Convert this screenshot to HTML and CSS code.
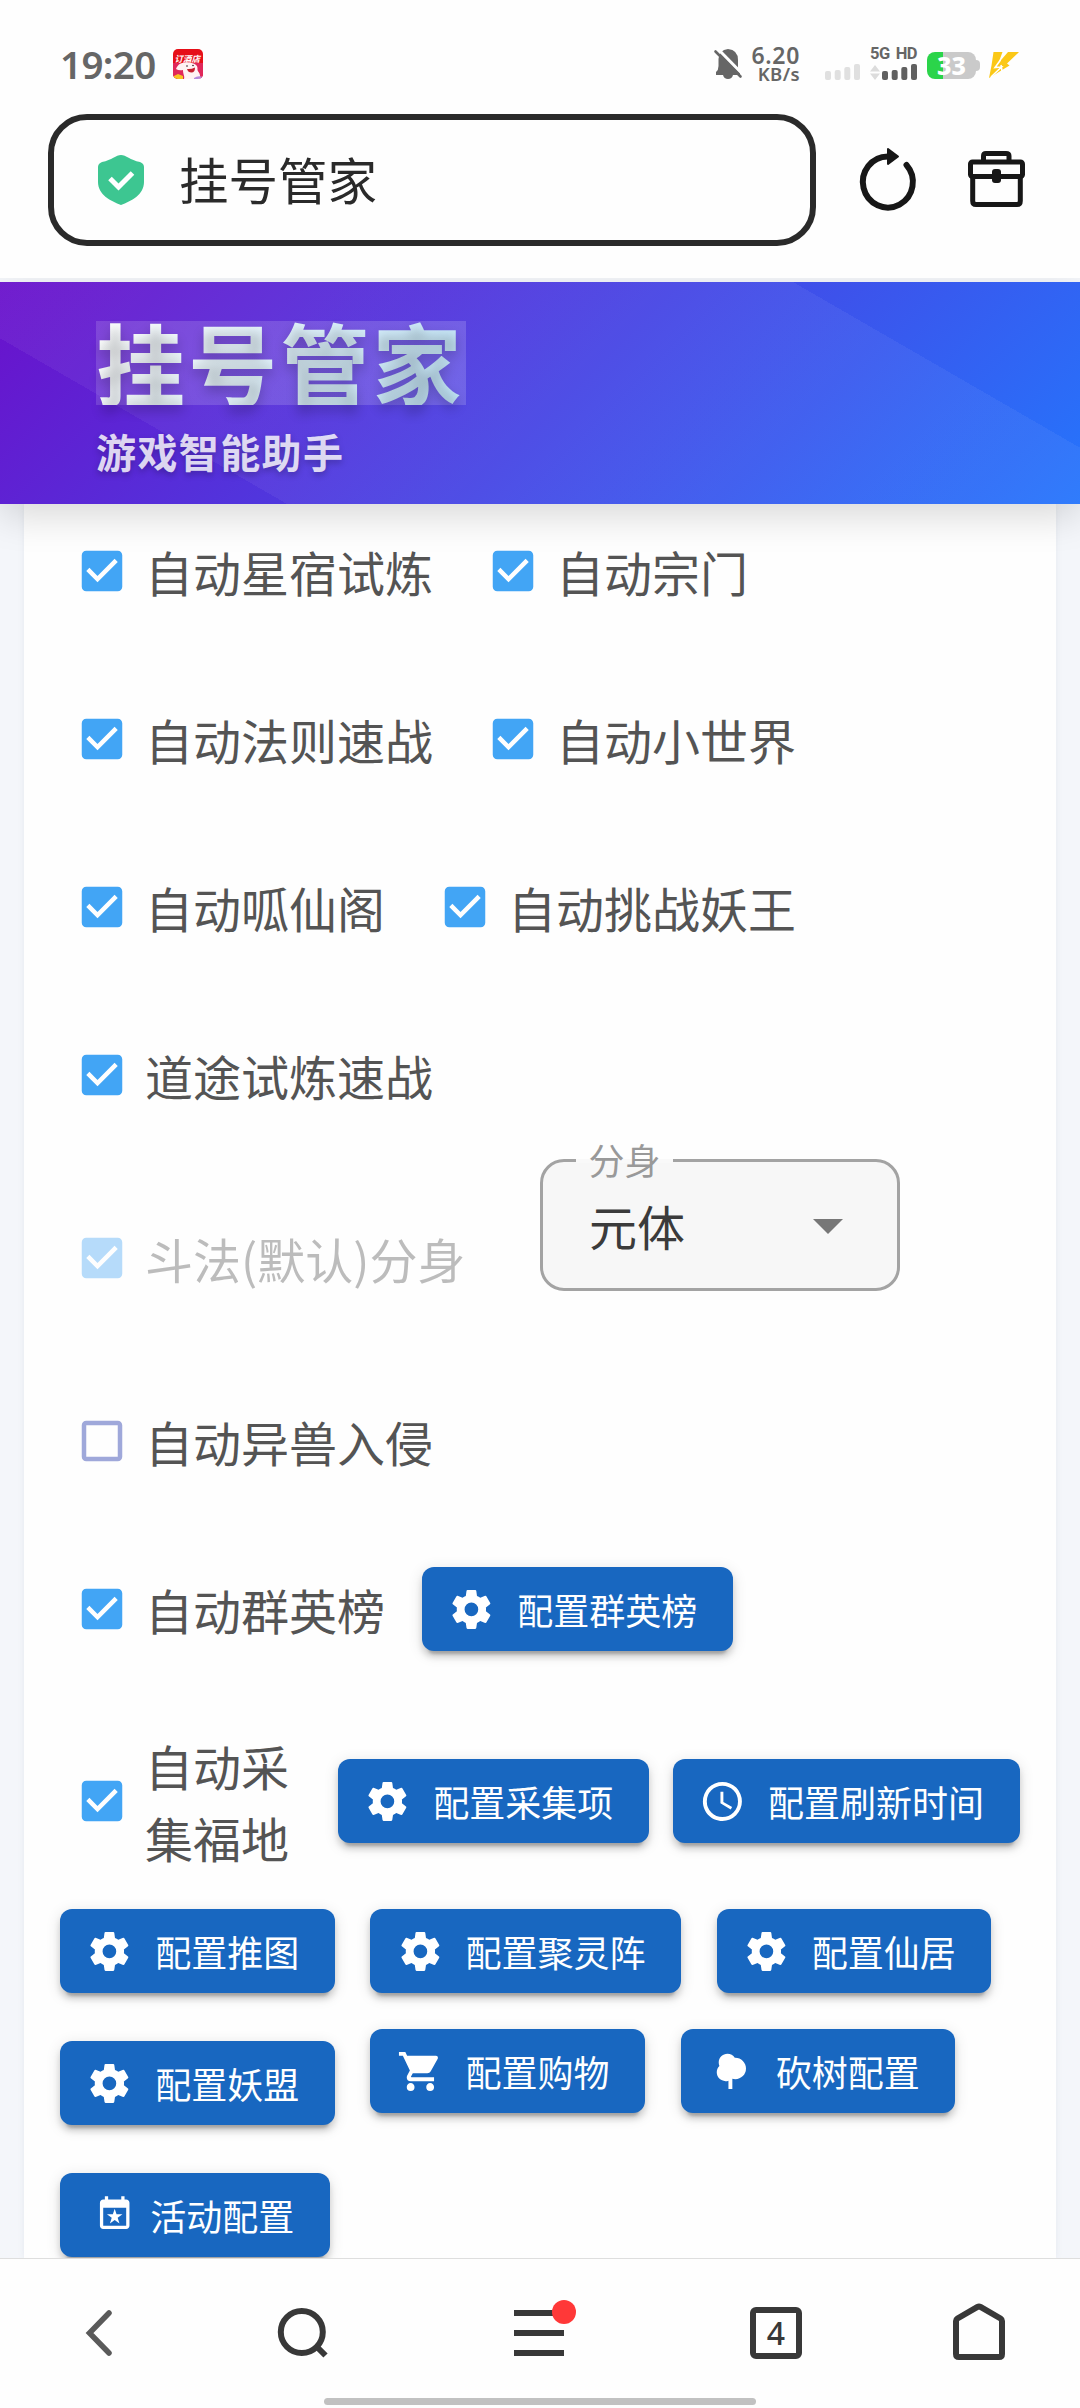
FILE: index.html
```html
<!DOCTYPE html>
<html lang="zh-CN">
<head>
<meta charset="utf-8">
<title>挂号管家</title>
<link rel="stylesheet" href="styles.css">
</head>
<body>
<svg class="defs" width="0" height="0" aria-hidden="true">
  <symbol id="i-check" viewBox="0 0 24 24"><path d="M10,17L5,12L6.41,10.58L10,14.17L17.59,6.58L19,8M19,3H5C3.89,3 3,3.89 3,5V19A2,2 0 0,0 5,21H19A2,2 0 0,0 21,19V5C21,3.89 20.1,3 19,3Z"/></symbol>
  <symbol id="i-blank" viewBox="0 0 24 24"><path d="M19,3H5C3.89,3 3,3.89 3,5V19A2,2 0 0,0 5,21H19A2,2 0 0,0 21,19V5C21,3.89 20.1,3 19,3M19,5V19H5V5H19Z"/></symbol>
  <symbol id="i-cog" viewBox="0 0 24 24"><path d="M12,15.5A3.5,3.5 0 0,1 8.5,12A3.5,3.5 0 0,1 12,8.5A3.5,3.5 0 0,1 15.5,12A3.5,3.5 0 0,1 12,15.5M19.43,12.97C19.47,12.65 19.5,12.33 19.5,12C19.5,11.67 19.47,11.34 19.43,11L21.54,9.37C21.73,9.22 21.78,8.95 21.66,8.73L19.66,5.27C19.54,5.05 19.27,4.96 19.05,5.05L16.56,6.05C16.04,5.66 15.5,5.32 14.87,5.07L14.5,2.42C14.46,2.18 14.25,2 14,2H10C9.75,2 9.54,2.18 9.5,2.42L9.13,5.07C8.5,5.32 7.96,5.66 7.44,6.05L4.95,5.05C4.73,4.96 4.46,5.05 4.34,5.27L2.34,8.73C2.21,8.95 2.27,9.22 2.46,9.37L4.57,11C4.53,11.34 4.5,11.67 4.5,12C4.5,12.33 4.53,12.65 4.57,12.97L2.46,14.63C2.27,14.78 2.21,15.05 2.34,15.27L4.34,18.73C4.46,18.95 4.73,19.03 4.95,18.95L7.44,17.94C7.96,18.34 8.5,18.68 9.13,18.93L9.5,21.58C9.54,21.82 9.75,22 10,22H14C14.25,22 14.46,21.82 14.5,21.58L14.87,18.93C15.5,18.67 16.04,18.34 16.56,17.94L19.05,18.95C19.27,19.03 19.54,18.95 19.66,18.73L21.66,15.27C21.78,15.05 21.73,14.78 21.54,14.63L19.43,12.97Z"/></symbol>
  <symbol id="i-clock" viewBox="0 0 24 24"><path d="M12,20A8,8 0 0,0 20,12A8,8 0 0,0 12,4A8,8 0 0,0 4,12A8,8 0 0,0 12,20M12,2A10,10 0 0,1 22,12A10,10 0 0,1 12,22C6.47,22 2,17.5 2,12A10,10 0 0,1 12,2M12.5,7V12.25L17,14.92L16.25,16.15L11,13V7H12.5Z"/></symbol>
  <symbol id="i-cart" viewBox="0 0 24 24"><path d="M17,18C15.89,18 15,18.89 15,20A2,2 0 0,0 17,22A2,2 0 0,0 19,20C19,18.89 18.1,18 17,18M1,2V4H3L6.6,11.59L5.24,14.04C5.09,14.32 5,14.65 5,15A2,2 0 0,0 7,17H19V15H7.42A0.25,0.25 0 0,1 7.17,14.75C7.17,14.7 7.18,14.66 7.2,14.63L8.1,13H15.55C16.3,13 16.96,12.58 17.3,11.97L20.88,5.5C20.95,5.34 21,5.17 21,5A1,1 0 0,0 20,4H5.21L4.27,2M7,18C5.89,18 5,18.89 5,20A2,2 0 0,0 7,22A2,2 0 0,0 9,20C9,18.89 8.1,18 7,18Z"/></symbol>
  <symbol id="i-tree" viewBox="0 0 24 24"><path d="M11,21V16.74C10.53,16.91 10.03,17 9.5,17C7,17 5,15 5,12.5C5,11.23 5.5,10.09 6.36,9.27C6.13,8.73 6,8.13 6,7.5C6,5 8,3 10.5,3C12.06,3 13.45,3.8 14.25,5C14.33,5 14.41,5 14.5,5A5.5,5.5 0 0,1 20,10.5A5.5,5.5 0 0,1 14.5,16C14,16 13.5,15.93 13,15.79V21H11Z"/></symbol>
  <symbol id="i-calendar" viewBox="0 0 24 24"><path d="M19 20H5V9H19V20M16 2V4H8V2H6V4H5C3.89 4 3 4.89 3 6V20C3 21.11 3.89 22 5 22H19C20.11 22 21 21.11 21 20V6C21 4.89 20.11 4 19 4H18V2H16M10.88 13H7.27L10.19 15.11L9.08 18.56L12 16.43L14.92 18.56L13.8 15.12L16.72 13H13.12L12 9.56L10.88 13Z"/></symbol>
</svg>

<div class="screen">
  <div class="statusbar">
    <span class="clock">19:20</span>
    <svg class="app-icon" viewBox="0 0 30 30">
      <clipPath id="app-clip"><rect width="30" height="30" rx="5"/></clipPath>
      <g clip-path="url(#app-clip)">
        <rect width="30" height="30" fill="#e60f18"/>
        <rect y="14" width="30" height="16" fill="#e0285a"/>
        <text class="app-text" x="1.500" y="12.500">订酒店</text>
        <path d="M3 20C5 14.500 10 12.500 16 14C21 13.500 25 16 24.500 20C24 23 28 23 27 30H11C12 27 10 26 10 21Q6 22 3 20Z" fill="#fff3f3"/>
        <circle cx="14" cy="17" r=".8" fill="#2b1a20"/><circle cx="20" cy="16.500" r=".8" fill="#2b1a20"/>
        <path d="M14 20Q18 20.500 22 18.500Q22 23.500 18.500 23.500Q15 23.500 14 20Z" fill="#c4202c"/>
        <path d="M1 27L5 25L10 27V30H1Z" fill="#f8c423"/>
        <path d="M21 29Q25 26 30 28V30H21Z" fill="#b58bdc"/>
      </g>
    </svg>
    <svg class="bell" viewBox="0 0 28 30">
      <path d="M2 26V23Q4.500 21 4.500 17V10Q5 1 14 0Q24 1 24 11V18Q24 22 26 23V26H19Q18 30 14 30Q10 30 9 26Z" fill="#666"/>
      <path d="M3.500 -.5L29 25.500" stroke="#fff" stroke-width="3"/>
      <path d="M1.500 2.500L26.500 27.500" stroke="#666" stroke-width="2.600" stroke-linecap="round"/>
    </svg>
    <span class="speed"><b>6.20</b><b class="unit">KB/s</b></span>
    <svg class="signal signal-off" viewBox="0 0 35 17"><rect y="7" width="6" height="9" rx="2"/><rect x="9.700" y="6" width="6" height="10" rx="2"/><rect x="19.300" y="3" width="6" height="13" rx="2"/><rect x="29" width="6" height="16" rx="2"/></svg>
    <span class="mobile">
      <span class="net"><b>5G</b><b>HD</b></span>
      <svg class="signal" viewBox="0 0 47 17"><path d="M0 7.500L5 1L10 7.500ZM0 9.500H10L5 16Z" fill="#dcdcdc"/><g fill="#606060"><rect x="12" y="7" width="6" height="9" rx="2"/><rect x="21.700" y="6" width="6" height="10" rx="2"/><rect x="31.300" y="3" width="6" height="13" rx="2"/><rect x="41" width="6" height="16" rx="2"/></g></svg>
    </span>
    <span class="battery">33</span>
    <svg class="bolt" viewBox="0 0 30 26"><path d="M4.500 0H13.500L9.500 11L19 0H30L18 11.500L20.500 13.500L0 26L2.500 13.500Z" fill="#fbc817"/><path d="M11.500 8L6 15.500L12.500 15L2 25M13 19L12 13" fill="none" stroke="#fff" stroke-width="1.600"/></svg>
  </div>

  <div class="toolbar">
    <div class="address">
      <svg class="shield" viewBox="0 0 46 50"><path d="M23 0C28 0 32 5 42 7Q46 8.500 46 12V27C46 40 33 46 23 50C13 46 0 40 0 27V12Q0 8.500 4 7C14 5 18 0 23 0Z" fill="#3dc691"/><path d="M12 23.500L20.500 32L34.500 18" fill="none" stroke="#fff" stroke-width="5"/></svg>
      <span>挂号管家</span>
    </div>
    <svg class="reload" viewBox="0 0 56 62"><path d="M28 8.500A25 25.500 0 1 0 46.500 17" fill="none" stroke="#171717" stroke-width="6" stroke-linecap="round"/><path d="M28 1L38 8.500L28 16Z" fill="#171717" stroke="#171717" stroke-width="2" stroke-linejoin="round"/></svg>
    <svg class="briefcase" viewBox="0 0 57 56"><g fill="none" stroke="#171717" stroke-width="5" stroke-linejoin="round"><path d="M15.500 10V5Q15.500 2.500 18 2.500H38Q41 2.500 41 5V10"/><rect x="2.500" y="11" width="52" height="14.500" rx="2"/><path d="M4.700 26V50Q4.700 53.500 8 53.500H49Q52.300 53.500 52.300 50V26"/></g><rect x="24" y="18" width="9" height="14" rx="3" fill="#171717"/></svg>
  </div>

  <main class="page">
    <header class="banner">
      <h1>挂号管家</h1>
      <p>游戏智能助手</p>
    </header>
    <section class="card">
      <div class="row">
        <label class="check"><svg><use href="#i-check"/></svg>自动星宿试炼</label>
        <label class="check"><svg><use href="#i-check"/></svg>自动宗门</label>
      </div>
      <div class="row">
        <label class="check"><svg><use href="#i-check"/></svg>自动法则速战</label>
        <label class="check"><svg><use href="#i-check"/></svg>自动小世界</label>
      </div>
      <div class="row">
        <label class="check"><svg><use href="#i-check"/></svg>自动呱仙阁</label>
        <label class="check"><svg><use href="#i-check"/></svg>自动挑战妖王</label>
      </div>
      <div class="row">
        <label class="check"><svg><use href="#i-check"/></svg>道途试炼速战</label>
      </div>
      <div class="row row-select">
        <label class="check disabled"><svg><use href="#i-check"/></svg>斗法(默认)分身</label>
        <div class="select"><span class="select-label">分身</span><span>元体</span><i class="caret"></i></div>
      </div>
      <div class="row row-single">
        <label class="check empty"><svg><use href="#i-blank"/></svg>自动异兽入侵</label>
      </div>
      <div class="row row-rank">
        <label class="check"><svg><use href="#i-check"/></svg>自动群英榜</label>
        <button class="btn"><svg><use href="#i-cog"/></svg>配置群英榜</button>
      </div>
      <div class="row row-gather">
        <label class="check"><svg><use href="#i-check"/></svg><span>自动采<br>集福地</span></label>
        <button class="btn"><svg><use href="#i-cog"/></svg>配置采集项</button>
        <button class="btn"><svg><use href="#i-clock"/></svg>配置刷新时间</button>
      </div>
      <div class="actions">
        <button class="btn"><svg><use href="#i-cog"/></svg>配置推图</button>
        <button class="btn"><svg><use href="#i-cog"/></svg>配置聚灵阵</button>
        <button class="btn"><svg><use href="#i-cog"/></svg>配置仙居</button>
      </div>
      <div class="actions actions-second">
        <button class="btn btn-low"><svg><use href="#i-cog"/></svg>配置妖盟</button>
        <button class="btn"><svg><use href="#i-cart"/></svg>配置购物</button>
        <button class="btn"><svg><use href="#i-tree"/></svg>砍树配置</button>
      </div>
      <div class="actions actions-third">
        <button class="btn btn-event"><svg><use href="#i-calendar"/></svg>活动配置</button>
      </div>
    </section>
  </main>

  <nav class="navbar">
    <svg class="nav-back" viewBox="0 0 26 46"><path d="M23 3L3.500 23L23 43" fill="none" stroke="#5a5a5a" stroke-width="5.500" stroke-linecap="round"/></svg>
    <svg class="nav-search" viewBox="0 0 50 52"><g fill="none" stroke="#383838" stroke-width="6"><circle cx="23.800" cy="24" r="21"/><path d="M39 39L47.500 47.500"/></g></svg>
    <span class="nav-menu"><svg viewBox="0 0 50 46"><path d="M0 3H50M0 23H50M0 43H50" stroke="#383838" stroke-width="6"/></svg><i class="dot"></i></span>
    <span class="nav-tabs">4</span>
    <svg class="nav-home" viewBox="0 0 52 57"><path d="M3 18Q3 16.500 4.500 15.500L24.500 3.800Q26 3 27.500 3.800L47.500 15.500Q49 16.500 49 18V51Q49 54 46 54H6Q3 54 3 51Z" fill="none" stroke="#383838" stroke-width="6"/></svg>
  </nav>
  <div class="gesture"></div>
</div>
</body>
</html>
```

FILE: styles.css
```css
* { box-sizing: border-box; }
body {
  margin: 0;
  background: #fff;
  font-family: "Noto Sans CJK SC", sans-serif;
}
svg { display: block; flex: none; overflow: visible; }
.defs { position: absolute; }
.screen {
  width: 1080px;
  height: 2408px;
  display: flex;
  flex-direction: column;
  overflow: hidden;
  background: #fefefe;
}

/* system status bar */
.statusbar {
  height: 114px;
  flex: none;
  display: flex;
  align-items: flex-start;
  padding: 47px 0 0 60px;
  font-family: "Noto Sans", sans-serif;
  color: #666;
}
.clock {
  width: 113px;
  font-size: 38.5px;
  font-weight: 600;
  line-height: 34px;
  letter-spacing: -.6px;
  white-space: nowrap;
}
.app-icon { width: 30px; height: 30px; margin-top: 2px; }
.app-text { font: italic 700 8.5px "Noto Sans CJK SC", sans-serif; fill: #fff; }
.bell { width: 28px; height: 30px; margin: 2px 0 0 511px; }
.speed {
  width: 58px;
  height: 36px;
  display: flex;
  flex-direction: column;
  align-items: flex-end;
  font-size: 23px;
  font-weight: 600;
  line-height: 17px;
  letter-spacing: .7px;
}
.speed b { font-weight: 600; }
.speed .unit { font-size: 18.5px; line-height: 19px; letter-spacing: .4px; }
.signal-off { width: 35px; height: 17px; margin: 17px 10px 0 25px; fill: #e0e0e0; }
.mobile { width: 47px; }
.mobile .signal { width: 47px; height: 17px; }
.net {
  height: 17px;
  display: flex;
  justify-content: space-between;
  font-family: Roboto, sans-serif;
  font-size: 16.5px;
  line-height: 13px;
}
.net b { letter-spacing: -.5px; }
.battery {
  position: relative;
  width: 49px;
  height: 27px;
  margin: 5px 0 0 10px;
  border-radius: 8px;
  background: linear-gradient(90deg, #2bd44a 33%, #cacaca 33%);
  color: #fff;
  font-size: 25px;
  font-weight: 800;
  line-height: 27px;
  text-align: center;
}
.battery::after {
  content: "";
  position: absolute;
  left: 49px;
  top: 8px;
  width: 4px;
  height: 11px;
  border-radius: 0 5px 5px 0;
  background: #cacaca;
}
.bolt { width: 30px; height: 26px; margin: 5px 0 0 13px; }

/* browser toolbar */
.toolbar {
  height: 164px;
  flex: none;
  display: flex;
  align-items: flex-start;
  padding-left: 48px;
}
.address {
  width: 768px;
  height: 132px;
  display: flex;
  align-items: center;
  padding-left: 44px;
  border: 6px solid #2a2a2a;
  border-radius: 39px;
  color: #2a2a2a;
  font-size: 49.5px;
  line-height: 60px;
}
.address span { margin-top: -3px; }
.shield { width: 46px; height: 50px; margin-right: 35px; }
.reload { width: 56px; height: 62px; margin: 34px 0 0 44px; }
.briefcase { width: 57px; height: 56px; margin: 37px 0 0 52px; }

/* web page */
.page {
  height: 1980px;
  flex: none;
  display: flex;
  flex-direction: column;
  padding: 4px 24px 0;
  overflow: hidden;
  background: #f4f6fa;
}
.banner {
  position: relative;
  z-index: 1;
  height: 222px;
  flex: none;
  margin: 0 -24px;
  padding: 39px 96px 0;
  background:
    linear-gradient(30deg, transparent 19.6%, rgba(255, 255, 255, .05) 19.6%, rgba(255, 255, 255, .05) 80.4%, transparent 80.4%),
    linear-gradient(135deg, #6a11cb, #2575fc);
  box-shadow: 0 12px 36px rgba(0, 0, 0, .15);
}
.banner h1 {
  width: 370px;
  height: 84px;
  margin: 0;
  font-size: 89px;
  font-weight: 700;
  line-height: 79px;
  letter-spacing: 3.2px;
  white-space: nowrap;
  color: transparent;
  background:
    linear-gradient(120deg, #fff, #bfe4f8) text,
    linear-gradient(90deg, rgba(255, 255, 255, .14), rgba(255, 255, 255, .16)) border-box;
  text-shadow: 0 6px 12px rgba(0, 0, 0, .2);
}
.banner p {
  margin: 24px 0 0;
  font-size: 40px;
  font-weight: 700;
  line-height: 44px;
  letter-spacing: 1.4px;
  color: rgba(255, 255, 255, .82);
  text-shadow: 0 3px 6px rgba(0, 0, 0, .25);
}
.card {
  flex: 1;
  padding: 27px 36px 0;
  background: #fefefe;
  box-shadow: 0 0 6px rgba(120, 130, 160, .12);
}
.row {
  height: 80px;
  display: flex;
  align-items: center;
  margin-bottom: 88px;
  padding-left: 15px;
}
.check {
  display: flex;
  align-items: center;
  margin-right: 53px;
  color: #545454;
  font-size: 48px;
  line-height: 72px;
  white-space: nowrap;
}
.check svg { width: 54px; height: 54px; margin-right: 16px; fill: #42a5f5; }
.check.empty svg { fill: #9fa8da; }
.check.disabled { opacity: .38; }
.row-select { height: 135px; align-items: flex-start; margin: -44px 0 107px; }
.row-select .check { width: 412px; margin: 63px 53px 0 0; }
.select {
  position: relative;
  width: 360px;
  height: 132px;
  display: flex;
  align-items: center;
  justify-content: space-between;
  padding: 0 54px 0 46px;
  border: 3px solid #a3a3a3;
  border-radius: 24px;
  background: #f7f7f7;
  color: #3b3b3b;
  font-size: 48px;
}
.select-label {
  position: absolute;
  left: 33px;
  top: -3px;
  width: 97px;
  height: 4px;
  background: #f9f9f9;
  color: #999;
  font-size: 36px;
  line-height: 0;
  text-align: center;
}
.caret {
  margin-top: 2px;
  border: 15px solid transparent;
  border-top-color: #777;
  border-bottom: 0;
}
.row-single { margin-bottom: 86px; }
.row-rank { height: 84px; margin-bottom: 78px; }
.row-rank .check { margin-right: 37px; }
.row-gather { height: 144px; margin-bottom: 36px; }
.row-gather .check { margin-right: 49px; }
.row-gather .btn + .btn { margin-left: 24px; }

.btn {
  height: 84px;
  flex: none;
  display: flex;
  align-items: center;
  margin: 0;
  padding: 0 35.6px 0 26.4px;
  border: 0;
  border-radius: 12px;
  background: #1867c0;
  color: #fff;
  font: 400 36px/54px "Noto Sans CJK SC", sans-serif;
  white-space: nowrap;
  box-shadow: 0 9px 3px -6px rgba(0, 0, 0, .2), 0 6px 6px rgba(0, 0, 0, .14), 0 3px 15px rgba(0, 0, 0, .12);
}
.btn svg { width: 46.8px; height: 46.8px; margin-right: 22px; fill: #fff; }
.actions { display: flex; gap: 35.500px; align-items: flex-start; }
.actions-second { margin-top: 36px; }
.btn-low { margin-top: 12px; }
.actions-third { margin-top: 48px; }
.btn-event { padding-left: 35.4px; }
.btn-event svg { width: 39.4px; height: 39.4px; margin: 0 15.4px 4px 0; }

/* browser navigation */
.navbar {
  height: 140px;
  flex: none;
  display: flex;
  align-items: flex-start;
  padding: 44px 0 0 86px;
  border-top: 1px solid #dedede;
  background: #fefefe;
}
.nav-back { width: 26px; height: 46px; margin: 7px 166px 0 0; }
.nav-search { width: 50px; height: 52px; margin: 5px 186px 0 0; }
.nav-menu { position: relative; margin: 7px 186px 0 0; }
.nav-menu svg { width: 50px; height: 46px; }
.dot {
  position: absolute;
  right: -12px;
  top: -10px;
  width: 24px;
  height: 24px;
  border-radius: 50%;
  background: #ff3838;
}
.nav-tabs {
  width: 52px;
  height: 52px;
  margin: 4px 151px 0 0;
  border: 6px solid #383838;
  border-radius: 6px;
  color: #383838;
  font: 500 32px/40px "Noto Sans", sans-serif;
  text-align: center;
}
.nav-home { width: 52px; height: 57px; }
.gesture {
  width: 432px;
  height: 7px;
  flex: none;
  margin: 0 auto;
  border-radius: 4px;
  background: #c1c1c1;
}
```
